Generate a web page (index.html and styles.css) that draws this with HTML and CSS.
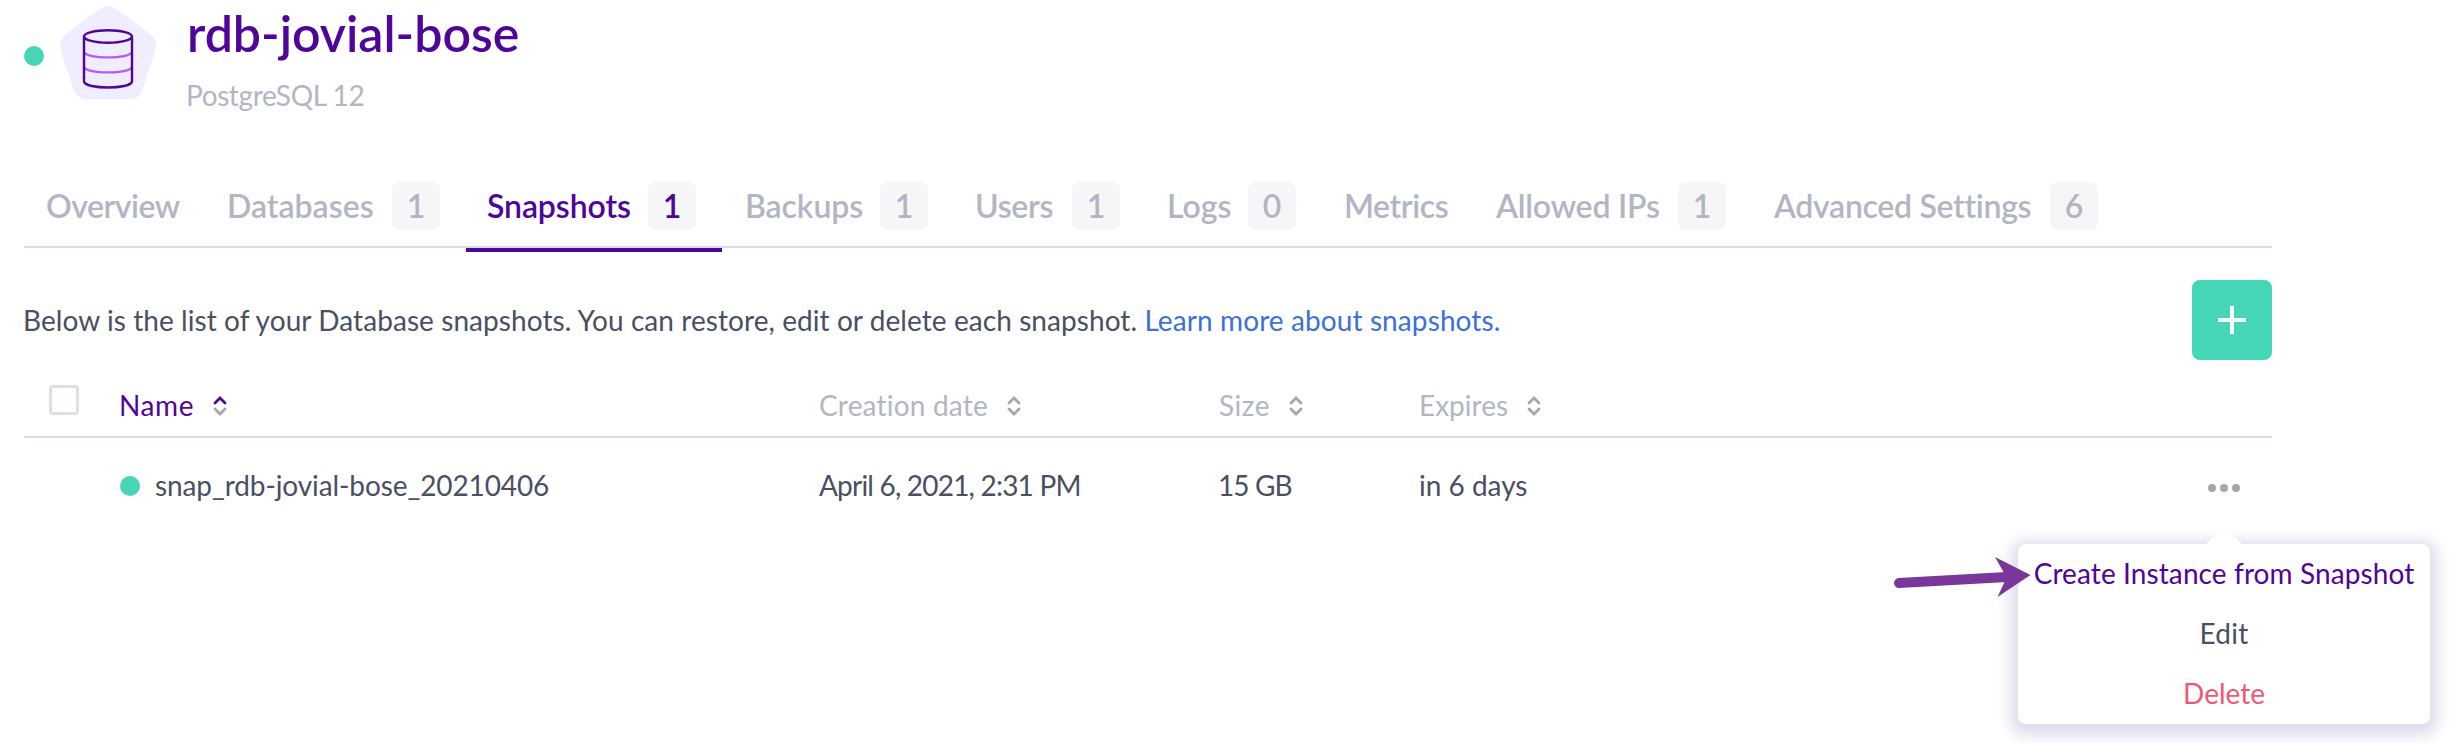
FILE: index.html
```html
<!DOCTYPE html>
<html lang="en">
<head>
<meta charset="utf-8">
<title>rdb-jovial-bose</title>
<link rel="stylesheet" href="styles.css">
</head>
<body>
<svg class="defs" width="0" height="0">
  <symbol id="sort" viewBox="0 0 14 22">
    <path class="sort-up" d="M2 8 7 3l5 5"/>
    <path class="sort-down" d="M2 14l5 5 5-5"/>
  </symbol>
</svg>
<main class="page">
  <header class="header">
    <span class="status-dot"></span>
    <svg class="db-icon" viewBox="0 0 96 94">
      <path fill="#efedff" d="M39 3.500Q48-3 57 3.500L90 28Q98.500 34.500 95.500 44L82 84.500Q79 93.500 69.500 93.500H27.500Q17.500 93.500 14 84.500L.7 44Q-2 34.500 6 28Z"/>
      <g fill="none" stroke-width="2.400">
        <path stroke="#b15cff" d="M24 46.500C30 53 66 53 72 46.500M24 61.500C30 68 66 68 72 61.500"/>
        <path stroke="#4f0599" d="M24 30.500V75.500C25 83.500 71 83.500 72 75.500V30.500"/>
        <ellipse stroke="#4f0599" cx="48" cy="30.500" rx="24" ry="6.200"/>
      </g>
    </svg>
    <div class="heading">
      <h1 class="title">rdb-jovial-bose</h1>
      <p class="engine">PostgreSQL 12</p>
    </div>
  </header>

  <nav class="tabs">
    <a class="tab tab-overview">Overview</a>
    <a class="tab tab-databases">Databases<span class="badge">1</span></a>
    <a class="tab tab-snapshots active">Snapshots<span class="badge">1</span></a>
    <a class="tab tab-backups">Backups<span class="badge">1</span></a>
    <a class="tab tab-users">Users<span class="badge">1</span></a>
    <a class="tab tab-logs">Logs<span class="badge">0</span></a>
    <a class="tab tab-metrics">Metrics</a>
    <a class="tab tab-allowed">Allowed IPs<span class="badge">1</span></a>
    <a class="tab tab-advanced">Advanced Settings<span class="badge">6</span></a>
  </nav>

  <section class="intro">
    <p class="intro-text">Below is the list of your Database snapshots. You can restore, edit or delete each snapshot. <a class="link">Learn more about snapshots.</a></p>
    <button class="add" aria-label="Add"><svg width="28" height="28" viewBox="0 0 28 28"><path d="M14 0v28M0 14h28" stroke="#fff" stroke-width="4"/></svg></button>
  </section>

  <section class="table">
    <div class="row head">
      <span class="checkbox"></span>
      <span class="cell sorted name">Name<svg class="sort"><use href="#sort"/></svg></span>
      <span class="cell created">Creation date<svg class="sort"><use href="#sort"/></svg></span>
      <span class="cell size">Size<svg class="sort"><use href="#sort"/></svg></span>
      <span class="cell">Expires<svg class="sort"><use href="#sort"/></svg></span>
    </div>
    <div class="row item">
      <span></span>
      <span class="cell snap"><span class="status-dot row-dot"></span>snap_rdb-jovial-bose_20210406</span>
      <span class="cell date">April 6, 2021, 2:31 PM</span>
      <span class="cell gb">15 GB</span>
      <span class="cell">in 6 days</span>
      <div class="actions">
        <svg class="dots" width="32" height="8" viewBox="0 0 32 8" fill="#a6a6a6"><circle cx="4" cy="4" r="4"/><circle cx="16" cy="4" r="4"/><circle cx="28" cy="4" r="4"/></svg>
        <div class="menu">
          <svg class="menu-tip" width="36" height="20" viewBox="0 0 36 20"><path d="M0 20 18 2l18 18Z" fill="#fff"/></svg>
          <a class="menu-item primary">Create Instance from Snapshot</a>
          <a class="menu-item edit">Edit</a>
          <a class="menu-item danger">Delete</a>
        </div>
      </div>
    </div>
  </section>
  <svg class="pointer" width="140" height="44" viewBox="0 0 140 44">
    <path d="M6 26 114 20" stroke="#783799" stroke-width="10" stroke-linecap="round"/>
    <path d="M102 0 137.500 18 104.500 40 112 24 110.500 15Z" fill="#783799"/>
  </svg>
</main>
</body>
</html>
```
FILE: styles.css
```css
* { box-sizing: border-box; }
body {
  margin: 0;
  background: #fff;
  color: #4a4f62;
  font: 400 28px/40px Lato, "Noto Sans", sans-serif;
}
h1, p { margin: 0; }
.defs { position: absolute; }
.page {
  position: relative;
  width: 2450px;
  height: 744px;
  padding-left: 24px;
  overflow: hidden;
}

.header { display: flex; height: 182px; padding-top: 3px; }
.status-dot {
  flex: none;
  width: 20px;
  height: 20px;
  margin-top: 43px;
  border-radius: 50%;
  background: #45d6b5;
}
.db-icon { width: 96px; height: 94px; margin: 2.5px 0 0 16px; }
.heading { margin-left: 30px; }
.title {
  padding-left: 1px;
  color: #4f0599;
  font-size: 50px;
  font-weight: 600;
  line-height: 60px;
}
.engine { margin-top: 12px; color: #b2b6c3; letter-spacing: -.4px; }

.tabs {
  display: flex;
  width: 2248px;
  height: 66px;
  border-bottom: 2px solid #d9dbec;
}
.tab {
  display: flex;
  justify-content: space-between;
  flex: none;
  height: 70px;
  padding: 0 24px 0 23px;
  color: #b2b6c3;
  font-size: 32px;
  font-weight: 600;
  line-height: 48px;
  white-space: nowrap;
}
.badge {
  width: 48px;
  height: 48px;
  border-radius: 8px;
  background: #f6f6f9;
  text-align: center;
  letter-spacing: 0;
}
.active {
  color: #4f0599;
  background: linear-gradient(#4f0599, #4f0599) bottom / 100% 4px no-repeat;
}
.tab-overview { width: 180px; padding-left: 22px; letter-spacing: -.5px; }
.tab-databases { width: 260px; margin-right: 2px; }
.tab-snapshots { width: 256px; padding-left: 21px; padding-right: 26px; letter-spacing: -.1px; }
.tab-backups { width: 230px; letter-spacing: -.1px; }
.tab-users { width: 192px; letter-spacing: -.3px; }
.tab-logs { width: 176px; }
.tab-metrics { width: 153px; padding-left: 24px; letter-spacing: -.4px; }
.tab-allowed { width: 277px; letter-spacing: -.2px; }
.tab-advanced { width: 372px; padding-left: 24px; letter-spacing: -.3px; }

.intro {
  display: flex;
  justify-content: space-between;
  align-items: center;
  width: 2248px;
  height: 80px;
  margin-top: 32px;
}
.intro-text { margin-left: -1px; letter-spacing: .07px; }
.link { color: #3c70dc; letter-spacing: .1px; }
.add {
  display: flex;
  align-items: center;
  justify-content: center;
  width: 80px;
  height: 80px;
  padding: 0;
  border: 0;
  border-radius: 8px;
  background: #45d6b5;
}

.table { width: 2248px; }
.row { display: grid; grid-template-columns: 95px 700px 400px 200px 1fr 120px; }
.head {
  height: 78px;
  padding-top: 25px;
  border-bottom: 2px solid #d6dae9;
  color: #b2b6c3;
}
.item { padding-top: 27px; }
.cell { display: flex; white-space: nowrap; }
.checkbox {
  width: 30px;
  height: 30px;
  margin-left: 25px;
  border: 3px solid #dce0ec;
  border-radius: 4px;
}
.sort {
  width: 14px;
  height: 22px;
  margin: 10px 0 0 19px;
  fill: none;
  stroke: #a6a6a6;
  stroke-width: 2.8;
  stroke-linecap: round;
}
.sorted { color: #4f0599; --up: #4f0599; }
.sort-up { stroke: var(--up, #a6a6a6); }
.name { letter-spacing: .6px; }
.created { letter-spacing: .2px; }
.size { letter-spacing: .5px; }
.snap { letter-spacing: -.1px; }
.date { letter-spacing: -.8px; }
.gb { margin-left: -1px; letter-spacing: -.9px; }
.row-dot { margin: 11px 15px 0 1px; }
.actions { position: relative; padding: 19px 0 0 56px; }
.dots { display: block; }

.menu {
  position: absolute;
  top: 79px;
  left: -134px;
  width: 412px;
  height: 180px;
  border-radius: 8px;
  background: #fff;
  box-shadow: 0 4px 14px 8px #dedded;
  text-align: center;
}
.menu-tip { position: absolute; top: -20px; left: 188px; }
.menu-item { display: block; height: 60px; line-height: 59px; white-space: nowrap; }
.primary { color: #4f0599; letter-spacing: .1px; }
.edit { letter-spacing: .2px; }
.danger { color: #ef5774; }
.pointer { position: absolute; top: 557px; left: 1893px; }
```
